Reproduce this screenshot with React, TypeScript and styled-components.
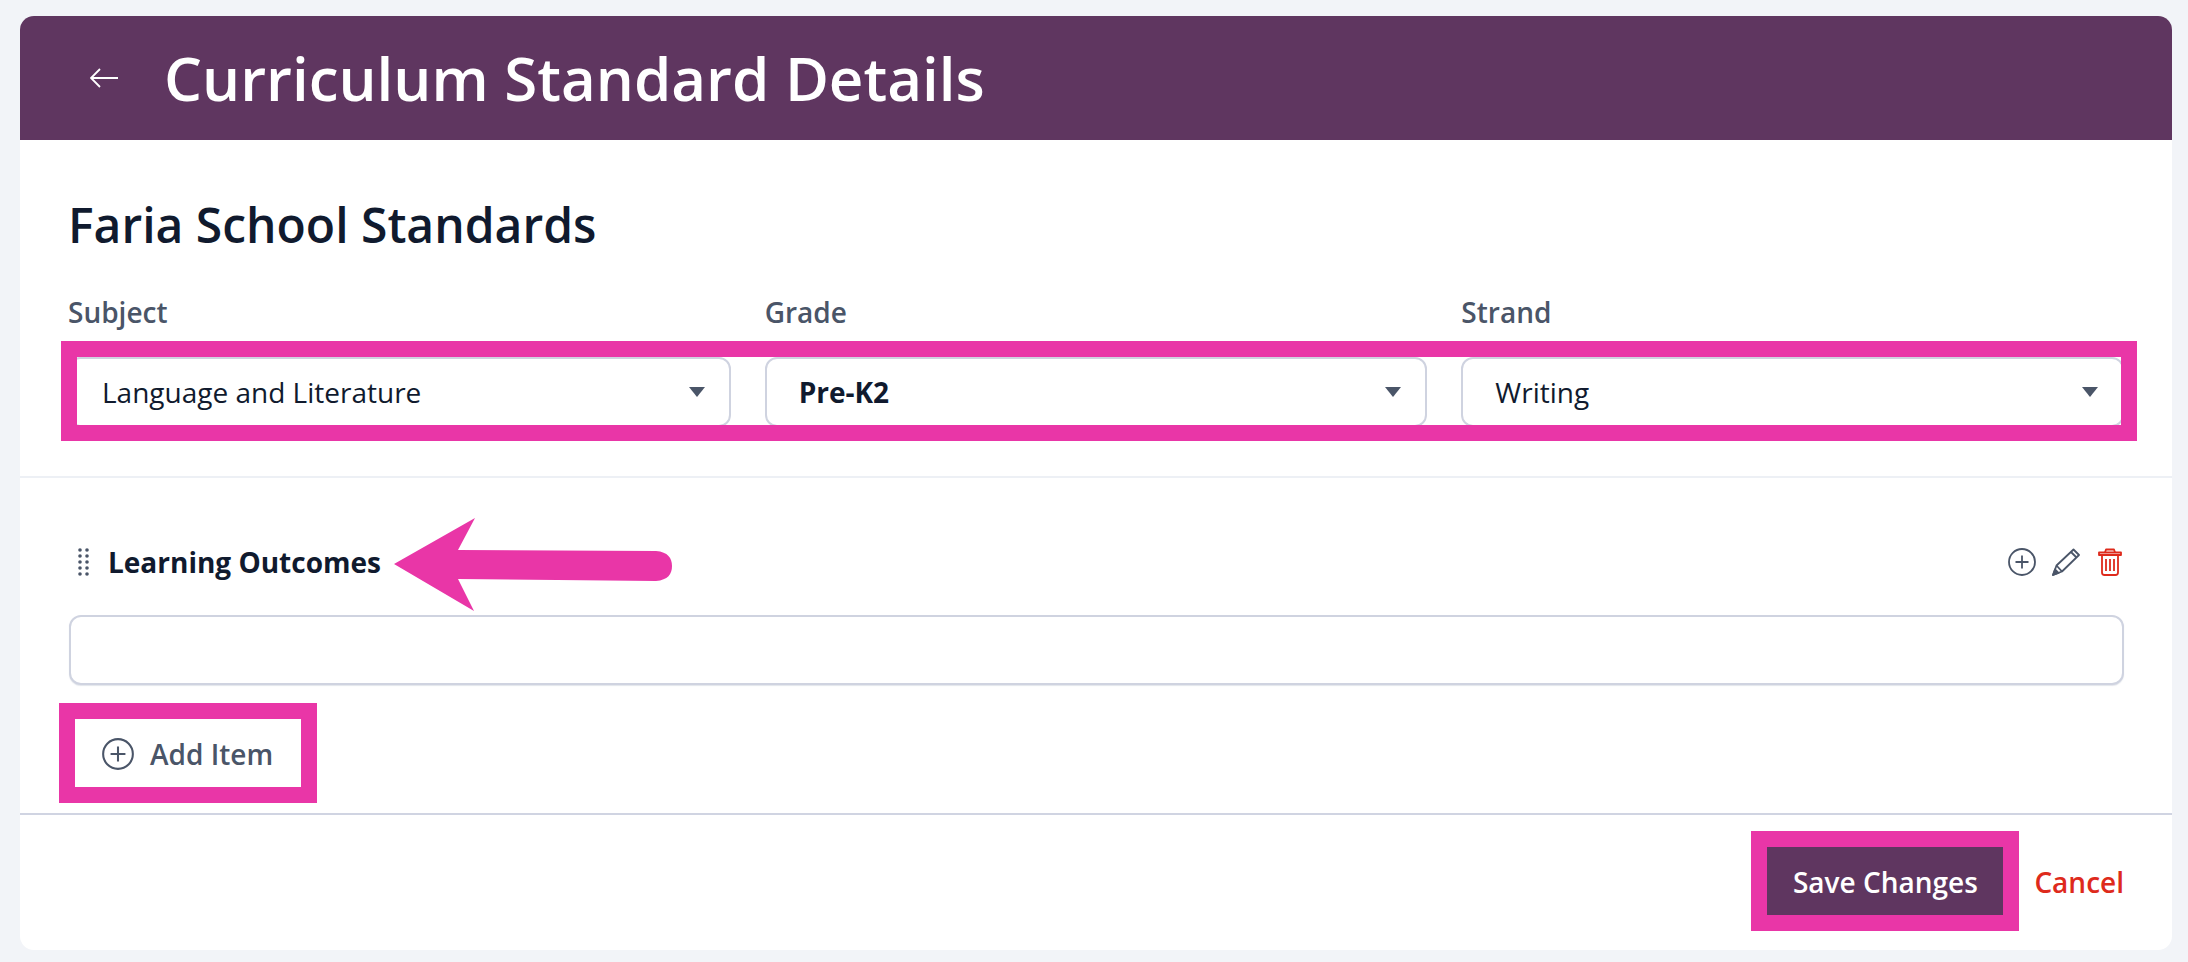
import React from "react";
import styled, { createGlobalStyle } from "styled-components";

const GlobalStyle = createGlobalStyle`
  html, body {
    margin: 0;
    padding: 0;
    background: #f2f4f8;
    font-family: "Open Sans", "Liberation Sans", sans-serif;
  }
  * { box-sizing: border-box; }
`;

const PINK = "#e936a7";
const DARK = "#101a2e";
const SLATE = "#4a5568";
const RED = "#de2a1c";

const Card = styled.div`
  margin: 16px 16px 12px 20px;
  height: 934px;
  background: #fff;
  border-radius: 14px;
  overflow: hidden;
  display: flex;
  flex-direction: column;
`;

const Header = styled.header`
  height: 124px;
  background: #5f3660;
  display: flex;
  align-items: center;
  padding-left: 70px;
  gap: 46px;
  color: #fff;
`;

const BackArrow = styled.svg`
  width: 28px;
  height: 20px;
  flex: none;
`;

const Title = styled.h1`
  margin: 0;
  font-size: 60px;
  font-weight: 600;
  line-height: 70px;
`;

const TopSection = styled.section`
  height: 338px;
  padding: 55px 48px 0;
  border-bottom: 2px solid #edf0f5;
`;

const SchoolName = styled.h2`
  margin: 0 0 39px;
  font-size: 48px;
  font-weight: 600;
  line-height: 60px;
  color: ${DARK};
`;

const Fields = styled.div`
  position: relative;
  display: grid;
  grid-template-columns: repeat(3, 1fr);
  column-gap: 34px;
`;

const Field = styled.div`
  display: flex;
  flex-direction: column;
`;

const Label = styled.label`
  font-size: 28px;
  font-weight: 600;
  line-height: 36px;
  color: ${SLATE};
  margin-bottom: 27px;
`;

const Select = styled.div<{ $strong?: boolean }>`
  height: 70px;
  border: 2px solid #cfd3e0;
  border-radius: 12px;
  background: #fff;
  display: flex;
  align-items: center;
  justify-content: space-between;
  padding: 0 24px 0 32px;
  font-size: 28px;
  font-weight: ${(p) => (p.$strong ? 700 : 400)};
  color: ${DARK};
`;

const Caret = styled.span`
  width: 0;
  height: 0;
  border-left: 8px solid transparent;
  border-right: 8px solid transparent;
  border-top: 10px solid ${SLATE};
`;

/* pink annotation frames drawn over the screenshot */
const Highlight = styled.span<{ $t: number; $r: number; $b: number; $l: number }>`
  position: absolute;
  top: ${(p) => p.$t}px;
  right: ${(p) => p.$r}px;
  bottom: ${(p) => p.$b}px;
  left: ${(p) => p.$l}px;
  border: 16px solid ${PINK};
  pointer-events: none;
`;

const Outcomes = styled.section`
  flex: 1;
  padding: 69px 48px 0 49px;
`;

const OutcomeHead = styled.div`
  position: relative;
  height: 30px;
  display: flex;
  align-items: center;
  margin-bottom: 38px;
`;

const Grip = styled.svg`
  width: 12px;
  height: 30px;
  margin-left: 9px;
  flex: none;
`;

const OutcomeTitle = styled.div`
  margin-left: 18px;
  font-size: 28px;
  font-weight: 700;
  line-height: 30px;
  color: ${DARK};
`;

const Actions = styled.div`
  margin-left: auto;
  display: flex;
  align-items: center;
  gap: 16px;
  padding-right: 2px;
`;

const PointerArrow = styled.svg`
  position: absolute;
  left: 325px;
  top: -29px;
  width: 278px;
  height: 93px;
`;

const ItemInput = styled.div`
  height: 70px;
  border: 2px solid #cfd3e0;
  border-radius: 12px;
  background: #fff;
  box-shadow: 0 1px 1px rgba(160, 168, 190, 0.3);
`;

const AddWrap = styled.div`
  position: relative;
  width: 226px;
  margin: 34px 0 0 6px;
`;

const AddButton = styled.button`
  width: 100%;
  height: 68px;
  border: 0;
  background: #fff;
  display: flex;
  align-items: center;
  gap: 16px;
  padding: 1px 0 0 27px;
  font-family: inherit;
  font-size: 28px;
  font-weight: 600;
  color: ${SLATE};
`;

const Footer = styled.footer`
  height: 137px;
  border-top: 2px solid #d0d4e2;
  display: flex;
  justify-content: flex-end;
  align-items: flex-start;
  padding: 32px 48px 0 0;
  gap: 31px;
`;

const SaveWrap = styled.div`
  position: relative;
`;

const SaveButton = styled.button`
  width: 236px;
  height: 68px;
  border: 0;
  padding: 2px 0 0;
  background: #5f3660;
  color: #fff;
  font-family: inherit;
  font-size: 28px;
  font-weight: 600;
`;

const CancelLink = styled.a`
  font-size: 28px;
  font-weight: 600;
  line-height: 70px;
  color: ${RED};
`;

const PlusCircle = ({ size }: { size: number }) => (
  <svg width={size} height={size} viewBox="0 0 28 28" fill="none" stroke={SLATE} strokeWidth="1.8">
    <circle cx="14" cy="14" r="13" />
    <path d="M14 7.5v13M7.5 14h13" />
  </svg>
);

const Pencil = () => (
  <svg width="28" height="28" viewBox="0 0 28 28" fill="none" stroke={SLATE} strokeWidth="1.8" strokeLinejoin="round">
    <path d="M1 27 4.5 17.5 21.5 1.5 27 7 10 23.5Z" />
    <path d="M19 4 24.5 9.5" />
    <path d="M4.5 17.5 10 23.5" />
    <path d="M1 27 3 21.5 6.5 25Z" fill={SLATE} />
  </svg>
);

const Trash = () => (
  <svg width="26" height="28" viewBox="-2 0 26 28" fill="none" stroke={RED} strokeWidth="1.8" strokeLinejoin="round">
    <path d="M1 4.5h22v2.5H1Z" />
    <path d="M7 4.5 8 1.5h8l1 3" />
    <path d="M4 7v17.5A2.5 2.5 0 0 0 6.5 27h11a2.5 2.5 0 0 0 2.5-2.5V7" />
    <path d="M8 11v12M12 11v12M16 11v12" />
  </svg>
);

const gripRows = [0, 1, 2, 3, 4];

export default function App() {
  return (
    <>
      <GlobalStyle />
      <Card>
        <Header>
          <BackArrow viewBox="0 0 28 20" fill="none" stroke="#fff" strokeWidth="1.8">
            <path d="M28 10H1M10 1 1 10l9 9" />
          </BackArrow>
          <Title>Curriculum Standard Details</Title>
        </Header>

        <TopSection>
          <SchoolName>Faria School Standards</SchoolName>
          <Fields>
            <Field>
              <Label>Subject</Label>
              <Select>
                Language and Literature
                <Caret />
              </Select>
            </Field>
            <Field>
              <Label>Grade</Label>
              <Select $strong>
                Pre-K2
                <Caret />
              </Select>
            </Field>
            <Field>
              <Label>Strand</Label>
              <Select>
                Writing
                <Caret />
              </Select>
            </Field>
            <Highlight $t={47} $r={-13} $b={-14} $l={-7} />
          </Fields>
        </TopSection>

        <Outcomes>
          <OutcomeHead>
            <Grip viewBox="0 0 12 30" fill={SLATE}>
              {gripRows.map((row) => (
                <React.Fragment key={row}>
                  <circle cx="2" cy={3 + row * 6} r="1.8" />
                  <circle cx="9" cy={3 + row * 6} r="1.8" />
                </React.Fragment>
              ))}
            </Grip>
            <OutcomeTitle>Learning Outcomes</OutcomeTitle>
            <PointerArrow viewBox="0 0 278 93" fill={PINK}>
              <path d="M0 46 81 0 64 32 262 33C274 34 278 40 278 48 278 56 274 62 262 63L64 61 80 93Z" />
            </PointerArrow>
            <Actions>
              <PlusCircle size={28} />
              <Pencil />
              <Trash />
            </Actions>
          </OutcomeHead>
          <ItemInput />
          <AddWrap>
            <AddButton>
              <PlusCircle size={32} />
              Add Item
            </AddButton>
            <Highlight $t={-16} $r={-16} $b={-16} $l={-16} />
          </AddWrap>
        </Outcomes>

        <Footer>
          <SaveWrap>
            <SaveButton>Save Changes</SaveButton>
            <Highlight $t={-16} $r={-16} $b={-16} $l={-16} />
          </SaveWrap>
          <CancelLink>Cancel</CancelLink>
        </Footer>
      </Card>
    </>
  );
}
